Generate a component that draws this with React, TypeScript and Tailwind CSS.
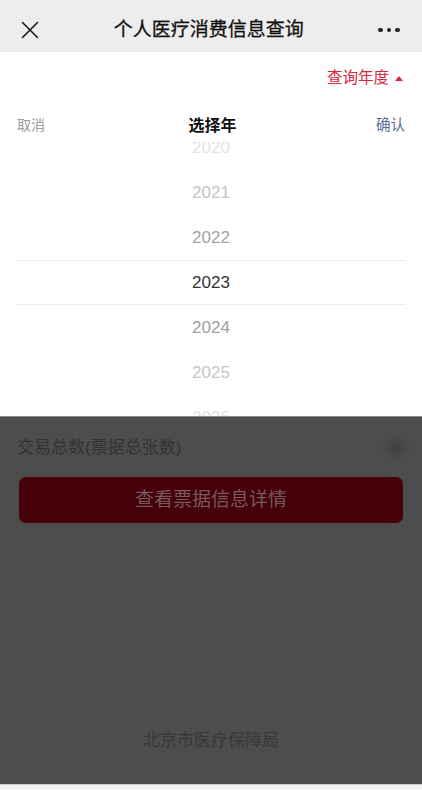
import React from 'react';

const years = [
  { y: '2020', c: 'text-[#e2e2e2]' },
  { y: '2021', c: 'text-[#c4c4c4]' },
  { y: '2022', c: 'text-[#a3a3a3]' },
  { y: '2023', c: 'text-[#333333]' },
  { y: '2024', c: 'text-[#a0a0a0]' },
  { y: '2025', c: 'text-[#c6c6c6]' },
  { y: '2026', c: 'text-[#e2e2e2]' },
];

export default function App() {
  return (
    <div
      className="w-[422px] h-[790px] overflow-hidden flex flex-col bg-[#f2f2f2]"
      style={{ fontFamily: '"Liberation Sans", "Noto Sans CJK SC", sans-serif' }}
    >
      {/* top nav bar */}
      <div className="h-[52px] shrink-0 bg-[#ededed] flex items-center justify-between px-[21px] pt-[8px]">
        <svg width="18" height="18" viewBox="0 0 18 18" fill="none">
          <path d="M1.5 1.5L16.5 16.5M16.5 1.5L1.5 16.5" stroke="#1a1a1a" strokeWidth="1.6" strokeLinecap="round" />
        </svg>
        <div className="text-[19px] font-normal text-[#111] [-webkit-text-stroke:0.3px_#111]">个人医疗消费信息查询</div>
        <div className="flex gap-[4px] pr-[1px]">
          <span className="w-[4.5px] h-[4.5px] rounded-full bg-[#222]" />
          <span className="w-[4.5px] h-[4.5px] rounded-full bg-[#222]" />
          <span className="w-[4.5px] h-[4.5px] rounded-full bg-[#222]" />
        </div>
      </div>

      {/* picker panel */}
      <div className="h-[364px] shrink-0 bg-white flex flex-col">
        <div className="h-[48px] flex items-center justify-end pr-[19px] gap-[6px] pt-[4px] text-[#d8263b]">
          <span className="text-[15.5px]">查询年度</span>
          <svg width="8" height="5" viewBox="0 0 8 5">
            <path d="M4 0L8 5H0z" fill="#d8263b" />
          </svg>
        </div>
        <div className="h-[42px] flex items-center justify-between px-[17px] pt-[9px]">
          <span className="text-[14px] text-[#9a9a9a]">取消</span>
          <span className="text-[16px] font-bold text-[#111] pl-[4px]">选择年</span>
          <span className="text-[14.5px] text-[#576b95]">确认</span>
        </div>
        <div className="flex-1 overflow-hidden relative px-[16px]">
          <div className="mt-[-17px] flex flex-col">
            {years.map((item) => (
              <div
                key={item.y}
                className={`h-[45px] flex items-center justify-center text-[17px] ${item.c} ${
                  item.y === '2023' ? 'border-y border-[#ececec]' : ''
                }`}
              >
                {item.y}
              </div>
            ))}
          </div>
        </div>
      </div>

      {/* dimmed page behind the mask */}
      <div className="h-[368px] shrink-0 bg-[#4d4d4d] border-t border-[#8a8a8a] flex flex-col">
        <div className="h-[60px] flex items-center justify-between pl-[17px] pr-[18px] pt-[1px]">
          <span className="text-[17px] text-[#333]">交易总数(票据总张数)</span>
          <span className="w-[16px] h-[16px] rounded-full bg-[#424242] blur-[3px]" />
        </div>
        <div className="mx-[19px] h-[46px] rounded-[7px] bg-[#45000a] flex items-center justify-center">
          <span className="text-[19px] text-[#765a5e]">查看票据信息详情</span>
        </div>
        <div className="flex-1 flex items-end justify-center pb-[31px]">
          <span className="text-[17px] text-[#383838]">北京市医疗保障局</span>
        </div>
      </div>

      <div className="flex-1 bg-[#f3f3f3] border-t border-[#cfcfcf]" />
    </div>
  );
}
